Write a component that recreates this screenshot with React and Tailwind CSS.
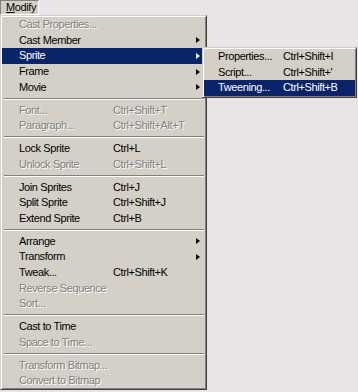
import React from "react";

const FONT = { fontFamily: '"Liberation Sans", Arial, sans-serif' };

const main = [
  { l: "Cast Properties...", d: true },
  { l: "Cast Member", a: true },
  { l: "Sprite", a: true, h: true },
  { l: "Frame", a: true },
  { l: "Movie", a: true },
  "sep",
  { l: "Font...", s: "Ctrl+Shift+T", d: true },
  { l: "Paragraph...", s: "Ctrl+Shift+Alt+T", d: true },
  "sep",
  { l: "Lock Sprite", s: "Ctrl+L" },
  { l: "Unlock Sprite", s: "Ctrl+Shift+L", d: true },
  "sep",
  { l: "Join Sprites", s: "Ctrl+J" },
  { l: "Split Sprite", s: "Ctrl+Shift+J" },
  { l: "Extend Sprite", s: "Ctrl+B" },
  "sep",
  { l: "Arrange", a: true },
  { l: "Transform", a: true },
  { l: "Tweak...", s: "Ctrl+Shift+K" },
  { l: "Reverse Sequence", d: true },
  { l: "Sort...", d: true },
  "sep",
  { l: "Cast to Time" },
  { l: "Space to Time...", d: true },
  "sep",
  { l: "Transform Bitmap...", d: true },
  { l: "Convert to Bitmap", d: true },
];

const sub = [
  { l: "Properties...", s: "Ctrl+Shift+I" },
  { l: "Script...", s: "Ctrl+Shift+'" },
  { l: "Tweening...", s: "Ctrl+Shift+B", h: true },
];

function Arrow({ white }) {
  return (
    <span
      className={
        "block w-0 h-0 border-y-[3.5px] border-y-transparent border-l-[4px] " +
        (white ? "border-l-white" : "border-l-black")
      }
    />
  );
}

function Item({ it, labelW, pl, h }) {
  const txt = it.h
    ? "text-white"
    : it.d
    ? "text-[#808080] [text-shadow:1px_1px_0_#ffffff]"
    : "text-black";
  return (
    <div
      className={
        "flex items-center pr-[5px] " + (it.h ? "bg-[#0a246a] " : "") + txt
      }
      style={{ height: h, paddingLeft: pl }}
    >
      <span className="shrink-0 whitespace-nowrap" style={{ width: labelW }}>
        {it.l}
      </span>
      <span className="flex-1 whitespace-nowrap">{it.s || ""}</span>
      {it.a && <Arrow white={it.h} />}
    </div>
  );
}

function Sep() {
  return (
    <div className="h-[7.33px] flex flex-col justify-center ml-[2px] mr-[1px]">
      <div className="h-px bg-[#808080]" />
      <div className="h-px bg-white" />
    </div>
  );
}

const frame =
  "border border-t-[#d4d0c8] border-l-[#d4d0c8] border-r-[#404040] border-b-[#404040] shadow-[inset_1px_1px_0_#ffffff,inset_-1px_-1px_0_#808080] p-px bg-[#d4d0c8]";

export default function App() {
  return (
    <div
      className="relative w-[358px] h-[392px] bg-[#e8e4e8] text-[11px] tracking-[-0.4px] leading-none overflow-hidden"
      style={FONT}
    >
      <div className="h-[15px] flex">
        <div className="w-[39px] h-[15px] bg-[#d4d0c8] border-t border-l border-t-[#808080] border-l-[#808080] border-b border-r border-b-white border-r-white flex items-center pl-[5px] text-black">
          <span>
            <span className="underline">M</span>odify
          </span>
        </div>
      </div>
      <div className={"w-[207px] " + frame}>
        {main.map((it, i) =>
          it === "sep" ? (
            <Sep key={i} />
          ) : (
            <Item key={i} it={it} labelW={94} pl={17} h="15.6px" />
          )
        )}
      </div>
      <div className={"absolute left-[202px] top-[47px] w-[155px] " + frame}>
        {sub.map((it, i) => (
          <Item key={i} it={it} labelW={65} pl={14} h="15.5px" />
        ))}
      </div>
    </div>
  );
}
